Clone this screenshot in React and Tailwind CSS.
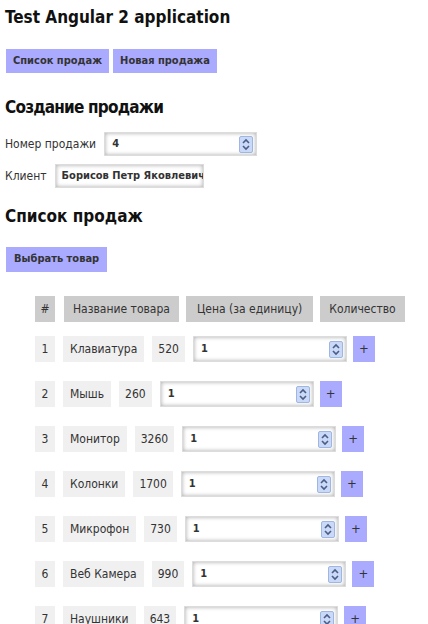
import { useState } from "react";

const products = [
  { id: 1, name: "Клавиатура", price: 520 },
  { id: 2, name: "Мышь", price: 260 },
  { id: 3, name: "Монитор", price: 3260 },
  { id: 4, name: "Колонки", price: 1700 },
  { id: 5, name: "Микрофон", price: 730 },
  { id: 6, name: "Веб Камера", price: 990 },
  { id: 7, name: "Наушники", price: 643 },
];

function Spinner() {
  return (
    <div className="flex flex-col items-center justify-center w-[14px] h-[17px] bg-[#c9d9f7] border border-[#9fb6e3] rounded-[2px]">
      <svg width="8" height="13" viewBox="0 0 8 13">
        <path d="M1 5 L4 2 L7 5" fill="none" stroke="#4b5d86" strokeWidth="1.6" />
        <path d="M1 8 L4 11 L7 8" fill="none" stroke="#4b5d86" strokeWidth="1.6" />
      </svg>
    </div>
  );
}

function NumberInput({ value, onChange, width, height }) {
  return (
    <div
      className={`flex items-center bg-white border border-[#dcdcdc] shadow-[inset_0_0_4px_rgba(0,0,0,0.35)] ${width} ${height}`}
    >
      <input
        className="flex-1 min-w-0 pl-[7px] text-[11px] font-bold text-[#333] bg-transparent outline-none"
        value={value}
        onChange={(e) => onChange(e.target.value)}
      />
      <div className="mr-[3px]">
        <Spinner />
      </div>
    </div>
  );
}

function Row({ item }) {
  const [qty, setQty] = useState("1");
  return (
    <div className="flex items-center h-[26px] mb-[19px]">
      <div className="h-full w-[20px] flex items-center justify-center bg-[#f0f0f0]">{item.id}</div>
      <div className="h-full ml-[8px] px-[7px] flex items-center bg-[#f0f0f0]">{item.name}</div>
      <div className="h-full ml-[8px] px-[6px] flex items-center bg-[#f0f0f0]">{item.price}</div>
      <div className="ml-[8px]">
        <NumberInput value={qty} onChange={setQty} width="w-[154px]" height="h-[26px]" />
      </div>
      <button className="ml-[6px] w-[22px] h-[26px] bg-[#aaaaff] text-[13px] text-[#333]">+</button>
    </div>
  );
}

function App() {
  const [num, setNum] = useState("4");
  const [client, setClient] = useState("Борисов Петр Яковлевич");

  return (
    <main className="px-[5px] text-[12px] text-[#333] font-['DejaVu_Sans_Condensed','DejaVu_Sans',sans-serif]">
      <h1 className="mt-[7px] text-[17px] leading-[20px] font-bold text-[#111]">Test Angular 2 application</h1>

      <div className="flex gap-[4px] mt-[22px] ml-px">
        <button className="h-[24px] px-[7px] bg-[#aaaaff] text-[11px] font-bold text-[#333]">Список продаж</button>
        <button className="h-[24px] px-[7px] bg-[#aaaaff] text-[11px] font-bold text-[#333]">Новая продажа</button>
      </div>

      <h2 className="mt-[24px] text-[17px] leading-[20px] font-bold tracking-[-0.8px] text-[#111]">Создание продажи</h2>

      <div className="flex items-center mt-[15px]">
        <span>Номер продажи</span>
        <div className="ml-[8px]">
          <NumberInput value={num} onChange={setNum} width="w-[153px]" height="h-[24px]" />
        </div>
      </div>

      <div className="flex items-center mt-[8px]">
        <span>Клиент</span>
        <div className="ml-[8px] w-[149px] h-[24px] flex items-center bg-white border border-[#dcdcdc] shadow-[inset_0_0_4px_rgba(0,0,0,0.35)] overflow-hidden">
          <input
            className="w-full pl-[6px] text-[11px] font-bold text-[#333] bg-transparent outline-none"
            value={client}
            onChange={(e) => setClient(e.target.value)}
          />
        </div>
      </div>

      <h2 className="mt-[18px] text-[17px] leading-[20px] font-bold text-[#111]">Список продаж</h2>

      <button className="mt-[21px] ml-px h-[25px] px-[8px] bg-[#aaaaff] text-[11px] font-bold text-[#333]">
        Выбрать товар
      </button>

      <div className="ml-[30px] mt-[24px]">
        <div className="flex items-center h-[26px] mb-[14px]">
          <div className="h-full w-[20px] flex items-center justify-center bg-[#cccccc]">#</div>
          <div className="h-full ml-[9px] px-[9px] flex items-center bg-[#cccccc]">Название товара</div>
          <div className="h-full ml-[7px] px-[11px] flex items-center bg-[#cccccc]">Цена (за единицу)</div>
          <div className="h-full ml-[7px] px-[9px] flex items-center bg-[#cccccc]">Количество</div>
        </div>
        {products.map((p) => (
          <Row key={p.id} item={p} />
        ))}
      </div>
    </main>
  );
}

export default App;
